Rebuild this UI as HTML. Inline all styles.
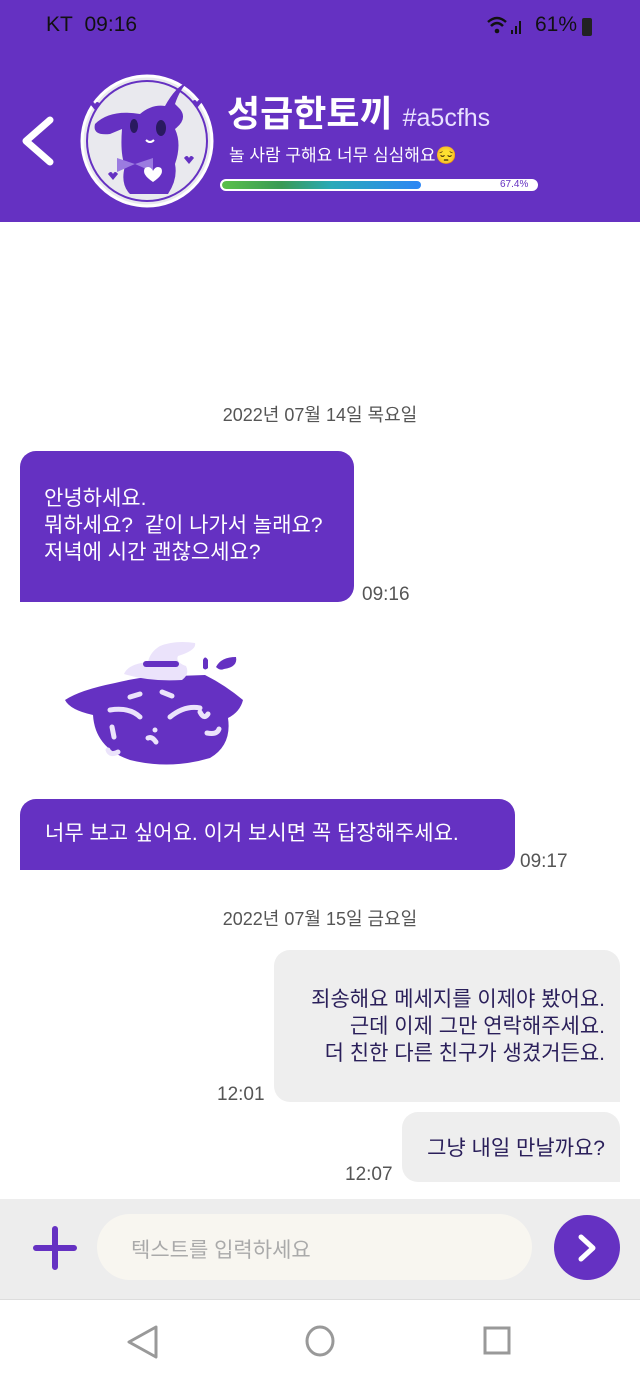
<!DOCTYPE html>
<html><head><meta charset="utf-8"><style>
*{margin:0;padding:0;box-sizing:border-box}
body{width:640px;height:1385px;position:relative;background:#fff;font-family:"Liberation Sans","Noto Sans CJK KR",sans-serif;overflow:hidden}
.a{position:absolute}
.hdr{left:0;top:0;width:640px;height:222px;background:#6531c2}
.t{white-space:nowrap}
.bub{font-size:21px;line-height:27px}
.date{width:640px;text-align:center;font-size:18px;color:#555}
.time{font-size:19px;color:#555}
</style></head><body>
<div class="a hdr"></div>
<div class="a t" style="left:46px;top:13px;font-size:21px;color:#111">KT&nbsp; 09:16</div>
<svg class="a" style="left:486px;top:14px" width="40" height="24" viewBox="0 0 40 24"><path d="M2 8 Q11 0 20 8" stroke="#111" stroke-width="2.5" fill="none"/><path d="M5 12 Q11 6 17 12" stroke="#111" stroke-width="2.5" fill="none"/><circle cx="11" cy="17" r="2.3" fill="#111"/><rect x="25" y="16" width="2" height="4" fill="#111"/><rect x="29" y="12" width="2" height="8" fill="#111"/><rect x="33" y="7" width="2" height="13" fill="#111"/></svg>
<div class="a t" style="left:535px;top:13px;font-size:21px;color:#111">61%</div>
<div class="a" style="left:582px;top:18px;width:10px;height:18px;background:#222;border-radius:2px"></div>
<svg class="a" style="left:18px;top:116px" width="38" height="50"><path d="M32 4 L8 25 L32 46" stroke="#fff" stroke-width="7" fill="none" stroke-linecap="round" stroke-linejoin="round"/></svg>
<svg class="a" style="left:80px;top:74px" width="134" height="134" viewBox="0 0 134 134">
<circle cx="67" cy="67" r="65" fill="#e9e9ee" stroke="#fff" stroke-width="3"/><circle cx="67" cy="67" r="60" fill="none" stroke="#6531c2" stroke-width="2"/>
<path d="M60 40 Q30 35 15 50 Q12 62 30 60 L42 55 Q40 80 45 92 Q40 110 50 120 L88 120 Q98 105 95 90 Q102 70 95 55 Q108 45 100 35 L95 30 Q100 15 108 8 Q96 12 85 32 Q72 30 60 40Z" fill="#6531c2"/>
<ellipse cx="81" cy="54" rx="5" ry="8" fill="#2a1a60"/><ellipse cx="54" cy="52" rx="4" ry="7" fill="#2a1a60"/>
<path d="M66 66 q4 4 8 0" stroke="#fff" stroke-width="2" fill="none"/>
<path d="M37 84 L55 90 L37 98 Z M55 90 L73 84 L73 98 Z" fill="#9b7be0"/>
<path d="M73 108 q-12-8-8-14 q5-3 8 3 q3-6 8-3 q4 6-8 14" fill="#fff"/>
<path d="M10 30 q3-4 5 0 q2-4 5 0 l-5 6z M112 28 q3-4 5 0 q2-4 5 0 l-5 6z M28 100 q3-4 5 0 q2-4 5 0 l-5 6z M104 84 q3-4 5 0 q2-4 5 0 l-5 6z" fill="#6531c2"/>
</svg>
<div class="a t" style="left:227px;top:85px;font-size:36px;font-weight:bold;color:#fff">성급한토끼 <span style="font-size:25px;font-weight:normal;color:#e8e0ff">#a5cfhs</span></div>
<div class="a t" style="left:229px;top:141px;font-size:17px;color:#fff">놀 사람 구해요 너무 심심해요😔</div>
<div class="a" style="left:220px;top:179px;width:318px;height:12px;background:#fff;border-radius:6px;border:2px solid #fff;overflow:hidden"><div style="width:199px;height:8px;background:linear-gradient(90deg,#5ac04a,#3a9a55 30%,#2aaab8 55%,#2c86f5);border-radius:4px"></div></div>
<div class="a t" style="left:500px;top:179px;font-size:10px;color:#6531c2">67.4%</div>

<div class="a date" style="left:0;top:401px">2022년 07월 14일 목요일</div>
<div class="a bub" style="left:20px;top:451px;width:334px;height:151px;background:#6531c2;border-radius:16px 16px 16px 0;color:#fff;padding:34px 0 0 24px">안녕하세요.<br>뭐하세요?&nbsp; 같이 나가서 놀래요?<br>저녁에 시간 괜찮으세요?</div>
<div class="a time" style="left:362px;top:584px">09:16</div>
<svg class="a" style="left:40px;top:620px" width="240" height="160" viewBox="40 620 240 160">
<path d="M65 700 Q80 690 115 683 Q135 678 150 677 L205 675 Q225 685 243 700 Q240 712 228 718 Q232 745 210 758 Q170 770 130 760 Q95 748 93 715 Q70 710 65 700Z" fill="#6531c2"/>
<path d="M124 674 Q128 664 148 662 Q150 652 160 646 Q175 640 195 643 Q197 650 178 656 Q175 662 186 666 Q190 674 182 680 Q150 682 124 674Z" fill="#ebe3fb"/>
<rect x="143" y="661" width="36" height="6" rx="3" fill="#6531c2"/>
<path d="M203 660 q2-5 5 0 l0 8 q-3 3-5 0z M216 667 q5-10 20-10 q2 10-12 12 q-4 2-8-2z" fill="#6531c2"/>
<g stroke="#ebe3fb" stroke-width="5" fill="none" stroke-linecap="round"><path d="M110 710 Q130 707 140 717"/><path d="M170 717 Q185 705 200 708"/><path d="M130 697 l10-3"/><path d="M162 692 l10 4"/><path d="M112 727 l2 10"/><path d="M148 738 q4-2 8 4"/><path d="M207 733 q10 2 12-4"/><path d="M200 712 q4 8 8 2"/><path d="M108 750 q2 6 10 2"/></g>
<circle cx="155" cy="730" r="2.5" fill="#ebe3fb"/>
</svg>
<div class="a bub t" style="left:20px;top:799px;width:495px;height:71px;background:#6531c2;border-radius:16px 16px 16px 0;color:#fff;padding:21px 0 0 25px">너무 보고 싶어요. 이거 보시면 꼭 답장해주세요.</div>
<div class="a time" style="left:520px;top:851px">09:17</div>

<div class="a date" style="left:0;top:905px">2022년 07월 15일 금요일</div>
<div class="a bub" style="left:274px;top:950px;width:346px;height:152px;background:#eeeeee;border-radius:16px 16px 0 16px;color:#2a1f5a;padding:36px 15px 0 0;text-align:right">죄송해요 메세지를 이제야 봤어요.<br>근데 이제 그만 연락해주세요.<br>더 친한 다른 친구가 생겼거든요.</div>
<div class="a time" style="left:217px;top:1084px">12:01</div>
<div class="a bub t" style="left:402px;top:1112px;width:218px;height:70px;background:#eeeeee;border-radius:16px 16px 0 16px;color:#2a1f5a;padding:23px 15px 0 0;text-align:right">그냥 내일 만날까요?</div>
<div class="a time" style="left:345px;top:1164px">12:07</div>

<div class="a" style="left:0;top:1199px;width:640px;height:100px;background:#ededed"></div>
<svg class="a" style="left:32px;top:1225px" width="46" height="46"><path d="M23 4v38M4 23h38" stroke="#6531c2" stroke-width="6" stroke-linecap="round"/></svg>
<div class="a" style="left:97px;top:1214px;width:435px;height:66px;background:#f8f6f0;border-radius:33px"></div>
<div class="a t" style="left:131px;top:1234px;font-size:21px;color:#aaa">텍스트를 입력하세요</div>
<div class="a" style="left:554px;top:1215px;width:66px;height:65px;background:#6531c2;border-radius:50%"></div>
<svg class="a" style="left:570px;top:1230px" width="34" height="36"><path d="M11 7 L23 18 L11 29" stroke="#fff" stroke-width="5" fill="none" stroke-linecap="round" stroke-linejoin="round"/></svg>
<div class="a" style="left:0;top:1299px;width:640px;height:86px;background:#fff;border-top:1px solid #ddd"></div>
<svg class="a" style="left:120px;top:1320px" width="400" height="50"><path d="M36 7 L9 22 L36 37Z" stroke="#999" stroke-width="3" fill="none" stroke-linejoin="round"/><ellipse cx="200" cy="21" rx="13" ry="14" stroke="#999" stroke-width="3" fill="none"/><rect x="365" y="8" width="24" height="25" stroke="#999" stroke-width="3" fill="none"/></svg>
</body></html>
